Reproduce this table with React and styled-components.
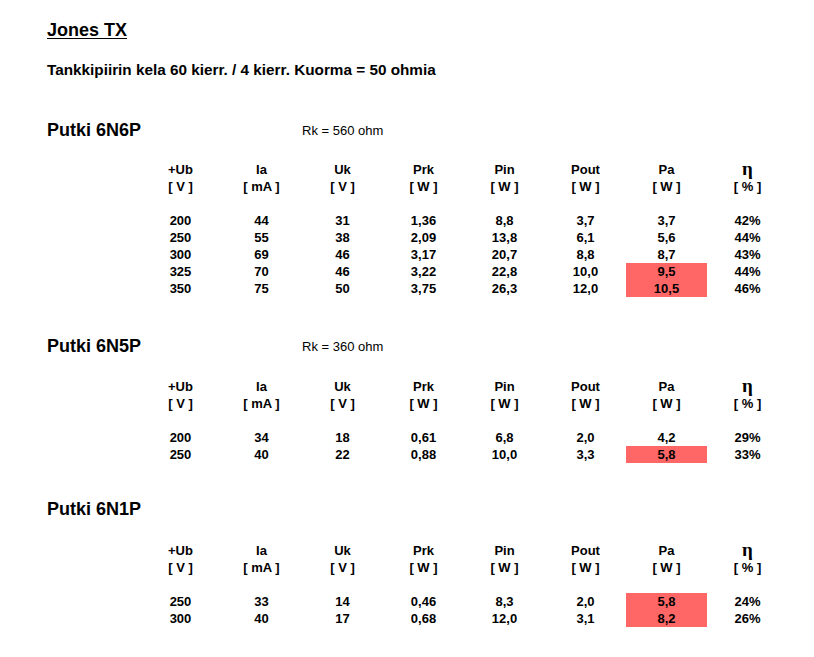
import React from "react";
import styled, { createGlobalStyle } from "styled-components";

const Global = createGlobalStyle`
  html, body { margin: 0; padding: 0; background: #fff; }
  body { font-family: "Liberation Sans", Arial, sans-serif; color: #000; }
`;

const Page = styled.div`
  padding: 20px 0 20px 47px;
  width: 767px;
`;

const Title = styled.h1`
  margin: 0;
  font-size: 18px;
  line-height: 20px;
  font-weight: bold;
  text-decoration: underline;
  text-underline-offset: 2px;
`;

const Subtitle = styled.p`
  margin: 21px 0 0;
  font-size: 15.3px;
  line-height: 18px;
  font-weight: bold;
`;

const Section = styled.section`
  padding-top: ${(p) => p.$top}px;
`;

const SectionHead = styled.div`
  display: grid;
  grid-template-columns: 255px auto;
  align-items: center;
  height: 20px;
`;

const TubeName = styled.h2`
  margin: 0;
  font-size: 18px;
  line-height: 20px;
  font-weight: bold;
`;

const Rk = styled.span`
  font-size: 13px;
  line-height: 14px;
  padding-top: 2px;
`;

const Table = styled.div`
  margin: ${(p) => p.$gap}px 0 0 93px;
  display: grid;
  grid-template-columns: repeat(8, 81px);
  grid-auto-rows: 17px;
`;

const Cell = styled.div`
  font-size: 13px;
  line-height: 17px;
  font-weight: bold;
  text-align: center;
  background: ${(p) => (p.$hl ? "#ff6666" : "transparent")};
`;

const Eta = styled(Cell)`
  font-family: "Liberation Serif", "Times New Roman", serif;
  font-size: 19px;
  line-height: 15px;
`;

const Blank = styled.div`
  grid-column: 1 / -1;
  height: ${(p) => p.$h}px;
`;

const labels = ["+Ub", "Ia", "Uk", "Prk", "Pin", "Pout", "Pa"];
const units = ["[ V ]", "[ mA ]", "[ V ]", "[ W ]", "[ W ]", "[ W ]", "[ W ]", "[ % ]"];

const sections = [
  {
    name: "Putki 6N6P",
    rk: "Rk = 560 ohm",
    top: 41,
    gap: 20.5,
    blank: 17,
    rows: [
      ["200", "44", "31", "1,36", "8,8", "3,7", "3,7", "42%"],
      ["250", "55", "38", "2,09", "13,8", "6,1", "5,6", "44%"],
      ["300", "69", "46", "3,17", "20,7", "8,8", "8,7", "43%"],
      ["325", "70", "46", "3,22", "22,8", "10,0", "9,5", "44%", true],
      ["350", "75", "50", "3,75", "26,3", "12,0", "10,5", "46%", true],
    ],
  },
  {
    name: "Putki 6N5P",
    rk: "Rk = 360 ohm",
    top: 39.5,
    gap: 21.5,
    blank: 17,
    rows: [
      ["200", "34", "18", "0,61", "6,8", "2,0", "4,2", "29%"],
      ["250", "40", "22", "0,88", "10,0", "3,3", "5,8", "33%", true],
    ],
  },
  {
    name: "Putki 6N1P",
    rk: "",
    top: 36.5,
    gap: 22.5,
    blank: 20,
    rows: [
      ["250", "33", "14", "0,46", "8,3", "2,0", "5,8", "24%", true],
      ["300", "40", "17", "0,68", "12,0", "3,1", "8,2", "26%", true],
    ],
  },
];

function DataTable({ rows, gap, blank }) {
  return (
    <Table $gap={gap}>
      {labels.map((l) => (
        <Cell key={l}>{l}</Cell>
      ))}
      <Eta>η</Eta>
      {units.map((u, i) => (
        <Cell key={i}>{u}</Cell>
      ))}
      <Blank $h={blank} />
      {rows.map((r, ri) =>
        r.slice(0, 8).map((v, ci) => (
          <Cell key={`${ri}-${ci}`} $hl={ci === 6 && r[8]}>
            {v}
          </Cell>
        ))
      )}
    </Table>
  );
}

export default function App() {
  return (
    <>
      <Global />
      <Page>
        <Title>Jones TX</Title>
        <Subtitle>Tankkipiirin kela 60 kierr. / 4 kierr. Kuorma = 50 ohmia</Subtitle>
        {sections.map((s) => (
          <Section key={s.name} $top={s.top}>
            <SectionHead>
              <TubeName>{s.name}</TubeName>
              <Rk>{s.rk}</Rk>
            </SectionHead>
            <DataTable rows={s.rows} gap={s.gap} blank={s.blank} />
          </Section>
        ))}
      </Page>
    </>
  );
}
